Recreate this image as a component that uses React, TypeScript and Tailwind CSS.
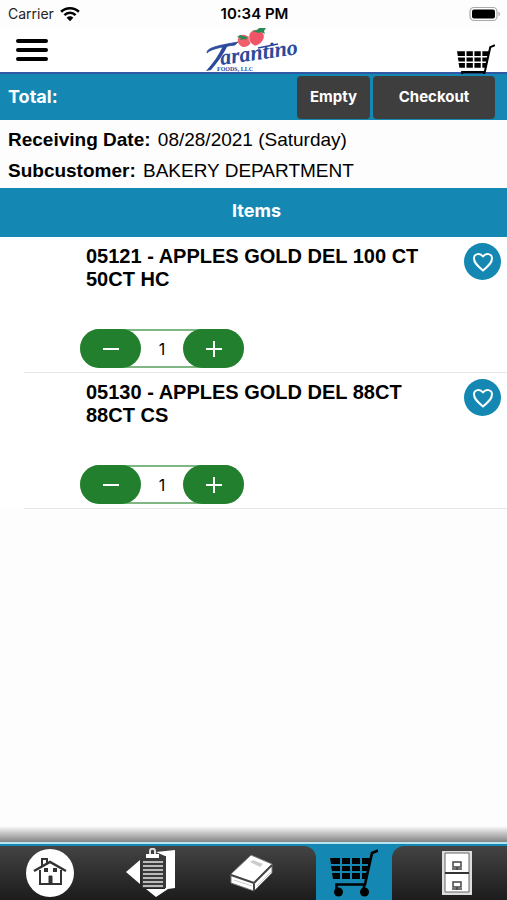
import { useState } from "react";

const products = [
  { id: "05121", name: "APPLES GOLD DEL 100 CT 50CT HC" },
  { id: "05130", name: "APPLES GOLD DEL 88CT 88CT CS" },
];

function Logo() {
  return (
    <svg viewBox="0 0 96 46" className="w-24 h-[46px]" role="img" aria-label="Tarantino Foods, LLC">
      <path d="M33 11c1-5 6-5 9-3 3 0 5 3 4 6-1 3-4 5-8 5-3-1-6-4-5-8z" fill="#f0606c" />
      <path d="M45 5c3-5 12-4 14 2 1 5-4 10-9 11-4-2-6-5-6-8 0-2 0-4 1-5z" fill="#ee5566" stroke="#fff" strokeWidth="0.6" />
      <path d="M32 9l4 1-1 2 4-1 2 1 1-3-4-1-3-1zM47 3l5-1 2-2 7 0-2 3 1 3-4-2-3 1-2-1z" fill="#278a55" />
      <path d="M2 25c0-5 8-7 31-11l-3 3c-14 2-24 4-28 8z" fill="#2b4a9b" stroke="#2b4a9b" strokeWidth="0.8" />
      <path d="M18 18l5-1C18 27 12 35 6 42l-5 1c7-8 13-16 17-25z" fill="#2b4a9b" />
      <text
        x="16"
        y="37"
        transform="rotate(-8 16 37)"
        fill="#2b4a9b"
        className="font-['Liberation_Serif',serif] font-bold italic text-[22px]"
      >
        arantino
      </text>
      <path d="M53 20l20-4" stroke="#2b4a9b" strokeWidth="1.600" />
      <text x="12" y="43" fill="#2b4a9b" className="font-['Liberation_Serif',serif] font-bold text-[6px]">
        FOODS, LLC
      </text>
    </svg>
  );
}

function CartIcon({ className }: { className: string }) {
  return (
    <svg viewBox="0 0 48 48" fill="none" className={className} aria-hidden="true">
      <path
        d="M0 9h10v6H1zM12 9h8v6h-8zM22 9h8v6h-8zM32 9h9l-1 6h-8zM1 17h9v5H2zM12 17h8v5h-8zM22 17h8v5h-8zM32 17h7l-1 5h-6zM2 24h8v6H3zM12 24h8v6h-8zM22 24h8v6h-8zM32 24h6l-1 6h-5z"
        fill="currentColor"
      />
      <path d="M48 1.500L42 4 35 35.500H6.500V41" stroke="currentColor" strokeWidth="2.600" />
      <path d="M34 35v6" stroke="currentColor" strokeWidth="2.600" />
      <circle cx="8.500" cy="43" r="4.500" fill="currentColor" />
      <circle cx="34.500" cy="43" r="4.500" fill="currentColor" />
    </svg>
  );
}

function StatusBar() {
  return (
    <div className="grid grid-cols-3 items-center h-7 pl-2 pr-1.5 text-sm text-[#222] font-['Inter',sans-serif]">
      <div className="flex items-center gap-1.5">
        <span>Carrier</span>
        <svg viewBox="0 0 18 14" className="w-5 h-4" aria-hidden="true">
          <path d="M1 5a11.500 11.500 0 0 1 16 0M4 8a7 7 0 0 1 10 0" fill="none" stroke="#000" strokeWidth="2.300" />
          <path d="M6 10.300a4.300 4.300 0 0 1 6 0L9 13.500z" fill="#000" />
        </svg>
      </div>
      <span className="text-center text-[15px] font-semibold text-black">10:34 PM</span>
      <svg viewBox="0 0 32 16" className="w-8 h-4 justify-self-end" aria-hidden="true">
        <rect x="1" y="1.500" width="27" height="13" rx="4" fill="#fff" stroke="#aaa" strokeWidth="1.200" />
        <rect x="3" y="3.500" width="23" height="9" rx="2" fill="#000" />
        <path d="M29.500 5.500c2 1 2 4 0 5z" fill="#aaa" />
      </svg>
    </div>
  );
}

function Item({ id, name }: { id: string; name: string }) {
  const [qty, setQty] = useState(1);
  const [liked, setLiked] = useState(false);

  return (
    <li className="ml-6 pl-14 pr-1 pt-2 pb-1 bg-white border-b border-gray-200">
      <div className="flex items-start justify-between h-[84px]">
        <h3 className="w-[340px] pl-1.5 text-xl leading-[23px] font-bold text-black">{`${id} - ${name}`}</h3>
        <button
          onClick={() => setLiked(!liked)}
          aria-label={`Favorite ${id}`}
          aria-pressed={liked}
          className="w-[37px] h-[37px] mr-0.5 -mt-0.5 shrink-0 rounded-full bg-[#1488b2] flex items-center justify-center"
        >
          <svg viewBox="0 0 24 24" fill={liked ? "#fff" : "none"} stroke="#fff" strokeWidth="2" strokeLinejoin="round" className="w-6 h-6">
            <path d="M12 20.500C6 15.500 3 12.500 3 8.500C3 3.500 9 2.500 12 6.500C15 2.500 21 3.500 21 8.500C21 12.500 18 15.500 12 20.500z" />
          </svg>
        </button>
      </div>
      <div className="flex w-[164px] h-[39px] rounded-full border-y-2 border-[#7fb683]">
        <button
          onClick={() => setQty(Math.max(0, qty - 1))}
          aria-label="Decrease quantity"
          className="w-[61px] -my-0.5 shrink-0 rounded-full bg-[#217f2d] flex items-center justify-center"
        >
          <svg viewBox="0 0 16 16" className="w-4 h-4" stroke="#fff" strokeWidth="2">
            <path d="M0 8h16" />
          </svg>
        </button>
        <input
          aria-label={`Quantity for ${id}`}
          value={qty}
          onChange={(e) => setQty(Number(e.target.value) || 0)}
          className="flex-1 min-w-0 bg-transparent text-center text-base text-black font-['Inter',sans-serif] outline-none"
        />
        <button
          onClick={() => setQty(qty + 1)}
          aria-label="Increase quantity"
          className="w-[61px] -my-0.5 shrink-0 rounded-full bg-[#217f2d] flex items-center justify-center"
        >
          <svg viewBox="0 0 16 16" className="w-4 h-4" stroke="#fff" strokeWidth="2">
            <path d="M0 8h16M8 0v16" />
          </svg>
        </button>
      </div>
    </li>
  );
}

function BottomNav() {
  const tab = "flex-1 flex items-center justify-center h-[54px] bg-linear-to-b from-[#444] to-[#1c1c1c]";

  return (
    <footer>
      <div className="h-4 bg-linear-to-b from-[#fdfdfd] to-[#858585]" />
      <nav className="border-t-2 border-[#b5e3f0] bg-[#1488b2]">
        <div className="flex pt-0.5">
          <a href="#home" aria-label="Home" className={tab}>
            <svg viewBox="0 0 48 48" className="w-12 h-12" fill="none" stroke="#333">
              <circle cx="24" cy="24" r="24" fill="#fff" stroke="none" />
              <path d="M14 21v14h21V21" strokeWidth="2" />
              <path d="M8 22l16-9 16 9" strokeWidth="2.500" />
              <path d="M16 17v-7h5v4" strokeWidth="2" />
              <path d="M23 35v-8h3v8z" fill="#333" />
              <path d="M18 19h4v4h-4zM27 19h4v4h-4z" fill="#333" stroke="none" />
            </svg>
          </a>
          <a href="#orders" aria-label="Orders" className={tab}>
            <svg viewBox="0 0 50 50" className="w-[50px] h-[50px]" fill="none">
              <path d="M14 12v24L0 24z" fill="#fff" />
              <path d="M30 4l19-2v38l-7 1-12 8-10-8h19V8z" fill="#fff" />
              <path d="M16 8h24v32H16z" fill="#3a3a3a" />
              <path d="M17 14h20M17 18h20M17 22h20M17 26h20M17 30h20M17 34h20M17 38h20" stroke="#e5e5e5" strokeWidth="1.500" />
              <path d="M24 7V3c0-3 5-3 5 0v3" stroke="#ddd" strokeWidth="2" />
              <path d="M20 6h13v4H20z" fill="#fff" />
            </svg>
          </a>
          <a href="#catalog" aria-label="Catalog" className={tab}>
            <svg viewBox="0 0 46 40" className="w-[46px] h-10" stroke="#444" strokeLinejoin="round">
              <path d="M2 21L22 2l21 9v9L25 38 2 30z" fill="#fff" stroke="#777" />
              <path d="M2 22l23 8 18-18M25 31v7" fill="none" strokeWidth="2" />
              <path d="M5 27l18 6M28 33l14-14" fill="none" stroke="#ccc" />
              <path d="M21 9l3-2 10 4-3 3z" fill="#ccc" stroke="none" />
            </svg>
          </a>
          {/* dark strips on both sides curve away from the active tab */}
          <span className="w-3.5 h-[54px] rounded-tr-xl bg-linear-to-b from-[#444] to-[#1c1c1c]" />
          <a href="#cart" aria-label="Cart" aria-current="page" className="w-[76px] h-[54px] flex items-center justify-center text-black">
            <CartIcon className="w-12 h-12" />
          </a>
          <span className="w-3.5 h-[54px] rounded-tl-xl bg-linear-to-b from-[#444] to-[#1c1c1c]" />
          <a href="#files" aria-label="Files" className={tab}>
            <svg viewBox="0 0 30 44" className="w-[30px] h-11" fill="none">
              <path d="M0 0h30v44H0z" fill="#ddd" />
              <path d="M3 2h24v39H3z" fill="#fff" stroke="#666" />
              <path d="M3 22h24" stroke="#333" strokeWidth="2" />
              <path d="M11 11h8v5h-8zM15 16v3M10 18h10M11 31h8v5h-8zM15 36v3M10 38h10" stroke="#444" strokeWidth="1.500" />
            </svg>
          </a>
        </div>
      </nav>
    </footer>
  );
}

export default function App() {
  return (
    <div className="min-h-screen flex flex-col bg-[#fdfdfd] font-['Liberation_Sans',Arial,sans-serif]">
      <StatusBar />
      <header className="grid grid-cols-3 h-[46px] px-4 bg-white border-b-2 border-[#3159a3]">
        <button aria-label="Open menu" className="w-8 h-[43px] flex flex-col justify-center gap-[5px]">
          <span className="h-1 rounded-xs bg-black" />
          <span className="h-1 rounded-xs bg-black" />
          <span className="h-1 rounded-xs bg-black" />
        </button>
        <div className="justify-self-center">
          <Logo />
        </div>
        <a href="#cart" aria-label="View cart" className="justify-self-end -mr-1 h-[46px] pt-4 overflow-hidden text-black">
          <CartIcon className="w-[38px] h-[38px]" />
        </a>
      </header>

      <div className="flex items-center h-[46px] pl-2 pr-3 bg-[#1488b2] text-white font-['Inter',sans-serif] font-bold">
        <h2 className="flex-1 text-lg">Total:</h2>
        <div className="flex gap-[3px] text-[15px]">
          <button className="w-[73px] h-[43px] rounded-sm bg-[#3e3e3e]">Empty</button>
          <button className="w-[122px] h-[43px] rounded-sm bg-[#3e3e3e]">Checkout</button>
        </div>
      </div>

      <div className="h-[68px] px-2 pt-1 text-[19px] leading-[31px] text-black">
        <p>
          <strong className="mr-0.5">Receiving Date:</strong> 08/28/2021 (Saturday)
        </p>
        <p>
          <strong className="mr-0.5">Subcustomer:</strong> BAKERY DEPARTMENT
        </p>
      </div>

      <h2 className="h-[49px] pb-1 pl-1.5 flex items-center justify-center bg-[#1488b2] text-white text-lg font-bold font-['Inter',sans-serif]">
        Items
      </h2>
      <main className="flex-1">
        <ul className="bg-white">
          {products.map((product) => (
            <Item key={product.id} id={product.id} name={product.name} />
          ))}
        </ul>
      </main>
      <BottomNav />
    </div>
  );
}
